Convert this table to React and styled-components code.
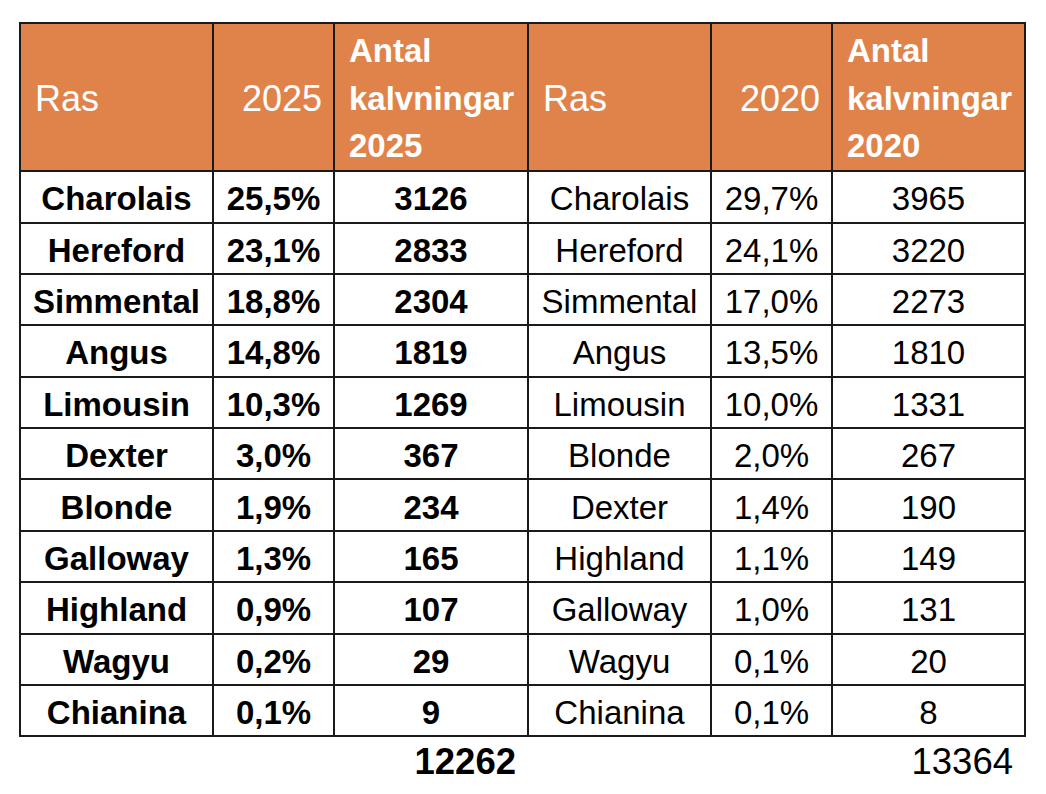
import React from "react";
import styled, { createGlobalStyle } from "styled-components";

const Global = createGlobalStyle`
  html, body { margin: 0; padding: 0; background: #ffffff; }
  body { font-family: "Liberation Sans", Arial, sans-serif; }
`;

const Table = styled.table`
  margin: 22px 0 0 19px;
  border-collapse: collapse;
  table-layout: fixed;
  width: 1005px;
  font-family: "Liberation Sans", Arial, sans-serif;
  font-size: 33px;
  color: #000;
`;

const HeadCell = styled.th`
  background: #e0834a;
  color: #fff;
  border: 2px solid #1a1a1a;
  height: 140px;
  padding: 3px ${(p) => (p.$align === "right" ? "11px" : "0")} 0 ${(p) => (p.$align === "right" ? "0" : "14px")};
  text-align: ${(p) => p.$align || "left"};
  vertical-align: middle;
  font-weight: ${(p) => (p.$bold ? 700 : 400)};
  font-size: ${(p) => (p.$bold ? "33px" : "36px")};
  line-height: 47.7px;
  white-space: nowrap;
`;

const Cell = styled.td`
  border: 2px solid #1a1a1a;
  height: 45.4px;
  padding: 4px 2px 0;
  text-align: center;
  vertical-align: middle;
  font-weight: ${(p) => (p.$bold ? 700 : 400)};
  line-height: 1;
  white-space: nowrap;
`;

const TotalCell = styled.td`
  border: none;
  height: 50px;
  padding: 0 12px 0 0;
  text-align: right;
  vertical-align: middle;
  font-size: 36.5px;
  font-weight: ${(p) => (p.$bold ? 700 : 400)};
  line-height: 1;
`;

const rows2025 = [
  ["Charolais", "25,5%", "3126"],
  ["Hereford", "23,1%", "2833"],
  ["Simmental", "18,8%", "2304"],
  ["Angus", "14,8%", "1819"],
  ["Limousin", "10,3%", "1269"],
  ["Dexter", "3,0%", "367"],
  ["Blonde", "1,9%", "234"],
  ["Galloway", "1,3%", "165"],
  ["Highland", "0,9%", "107"],
  ["Wagyu", "0,2%", "29"],
  ["Chianina", "0,1%", "9"],
];

const rows2020 = [
  ["Charolais", "29,7%", "3965"],
  ["Hereford", "24,1%", "3220"],
  ["Simmental", "17,0%", "2273"],
  ["Angus", "13,5%", "1810"],
  ["Limousin", "10,0%", "1331"],
  ["Blonde", "2,0%", "267"],
  ["Dexter", "1,4%", "190"],
  ["Highland", "1,1%", "149"],
  ["Galloway", "1,0%", "131"],
  ["Wagyu", "0,1%", "20"],
  ["Chianina", "0,1%", "8"],
];

export default function App() {
  return (
    <>
      <Global />
      <Table>
        <colgroup>
          <col style={{ width: 193 }} />
          <col style={{ width: 121 }} />
          <col style={{ width: 194 }} />
          <col style={{ width: 183 }} />
          <col style={{ width: 121 }} />
          <col style={{ width: 193 }} />
        </colgroup>
        <thead>
          <tr>
            <HeadCell>Ras</HeadCell>
            <HeadCell $align="right">2025</HeadCell>
            <HeadCell $bold>
              Antal
              <br />
              kalvningar
              <br />
              2025
            </HeadCell>
            <HeadCell>Ras</HeadCell>
            <HeadCell $align="right">2020</HeadCell>
            <HeadCell $bold>
              Antal
              <br />
              kalvningar
              <br />
              2020
            </HeadCell>
          </tr>
        </thead>
        <tbody>
          {rows2025.map((r, i) => (
            <tr key={i}>
              <Cell $bold>{r[0]}</Cell>
              <Cell $bold>{r[1]}</Cell>
              <Cell $bold>{r[2]}</Cell>
              <Cell>{rows2020[i][0]}</Cell>
              <Cell>{rows2020[i][1]}</Cell>
              <Cell>{rows2020[i][2]}</Cell>
            </tr>
          ))}
        </tbody>
        <tfoot>
          <tr>
            <TotalCell />
            <TotalCell />
            <TotalCell $bold>12262</TotalCell>
            <TotalCell />
            <TotalCell />
            <TotalCell>13364</TotalCell>
          </tr>
        </tfoot>
      </Table>
    </>
  );
}
